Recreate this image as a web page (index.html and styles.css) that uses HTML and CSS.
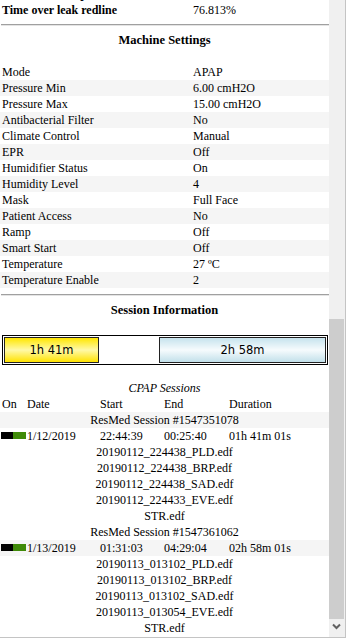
FILE: index.html
```html
<!DOCTYPE html>
<html>
  <head>
    <title>Sleep report</title>
    <link rel="stylesheet" href="styles.css">
  </head>
  <body>
    <div class="window">
      <div class="scroller">
        <div class="inner">
          <div class="kv">
            <div class="row"><b>Leak rate 95th percentile</b><span>18.24 L/min</span></div>
            <div class="row"><b>Time over leak redline</b><span>76.813%</span></div>
          </div>

          <div class="rule"></div>
          <h3>Machine Settings</h3>

          <div class="kv striped">
            <div class="row"><span>Mode</span><span>APAP</span></div>
            <div class="row"><span>Pressure Min</span><span>6.00 cmH2O</span></div>
            <div class="row"><span>Pressure Max</span><span>15.00 cmH2O</span></div>
            <div class="row"><span>Antibacterial Filter</span><span>No</span></div>
            <div class="row"><span>Climate Control</span><span>Manual</span></div>
            <div class="row"><span>EPR</span><span>Off</span></div>
            <div class="row"><span>Humidifier Status</span><span>On</span></div>
            <div class="row"><span>Humidity Level</span><span>4</span></div>
            <div class="row"><span>Mask</span><span>Full Face</span></div>
            <div class="row"><span>Patient Access</span><span>No</span></div>
            <div class="row"><span>Ramp</span><span>Off</span></div>
            <div class="row"><span>Smart Start</span><span>Off</span></div>
            <div class="row"><span>Temperature</span><span>27 ºC</span></div>
            <div class="row"><span>Temperature Enable</span><span>2</span></div>
          </div>

          <div class="rule"></div>
          <h3>Session Information</h3>

          <!-- widths follow the minutes between 22:44 and 04:29 -->
          <div class="timeline">
            <div class="slot on" style="width: 95px">1h 41m</div>
            <div class="gap" style="width: 60px"></div>
            <div class="slot cpap" style="width: 167px">2h 58m</div>
          </div>

          <div class="caption">CPAP Sessions</div>
          <div class="sessions">
            <div class="srow head">
              <span>On</span><span>Date</span><span>Start</span><span>End</span><span>Duration</span>
            </div>

            <div class="title grey">ResMed Session #1547351078</div>
            <div class="srow">
              <span class="bar"><i></i><i></i></span><span>1/12/2019</span><span>22:44:39</span><span>00:25:40</span><span>01h 41m 01s</span>
            </div>
            <div class="files">
              <div>20190112_224438_PLD.edf</div>
              <div>20190112_224438_BRP.edf</div>
              <div>20190112_224438_SAD.edf</div>
              <div>20190112_224433_EVE.edf</div>
              <div>STR.edf</div>
            </div>

            <div class="title">ResMed Session #1547361062</div>
            <div class="srow grey">
              <span class="bar"><i></i><i></i></span><span>1/13/2019</span><span>01:31:03</span><span>04:29:04</span><span>02h 58m 01s</span>
            </div>
            <div class="files">
              <div>20190113_013102_PLD.edf</div>
              <div>20190113_013102_BRP.edf</div>
              <div>20190113_013102_SAD.edf</div>
              <div>20190113_013054_EVE.edf</div>
              <div>STR.edf</div>
            </div>
          </div>
        </div>
      </div>

      <div class="scrollbar">
        <div class="track"></div>
        <div class="thumb"></div>
        <div class="arrow">
          <svg width="16" height="18" viewBox="0 0 16 18">
            <polyline points="4,5.5 7.5,9 11,5.5" fill="none" stroke="#606060" stroke-width="2"/>
          </svg>
        </div>
      </div>
    </div>
  </body>
</html>
```

FILE: styles.css
```css
* { padding: 0; margin: 0; box-sizing: border-box; }

body {
  background: white;
  color: #000;
  font-family: "Liberation Serif", "Times New Roman", serif;
  font-size: 12px;
  line-height: 16px;
}

.window {
  display: flex;
  width: 346px;
  height: 638px;
  border-right: 1px solid #c4c4c4;
  border-bottom: 1px solid #c4c4c4;
}

.scroller {
  width: 329px;
  overflow: hidden;
}

.inner {
  margin-top: -14px;
}

.kv .row {
  display: grid;
  grid-template-columns: 191px 1fr;
  padding-left: 2px;
  height: 16px;
  white-space: nowrap;
}

.striped .row:nth-child(even) { background: #f5f5f5; }

.rule {
  margin: 6px 0 0 1px;
  height: 2px;
  border-top: 1px solid #a0a0a0;
  border-bottom: 1px solid #e4e4e4;
}

h3 {
  margin-top: 6px;
  margin-bottom: 16px;
  height: 16px;
  text-align: center;
  font-size: 12.5px;
}

.timeline {
  display: flex;
  margin: 17px 0 0 2px;
  width: 326px;
  padding: 1px;
  border: 1px solid #000;
}

.slot {
  height: 26px;
  border: 1px solid #222;
  font-family: "DejaVu Sans", Tahoma, sans-serif;
  font-size: 11.5px;
  line-height: 24px;
  text-align: center;
}

.slot.on {
  background: linear-gradient(#ffe600, #fff9a8 50%, #ffe200);
}

.slot.cpap {
  background: linear-gradient(#c6e3ed, #f6fbfd 50%, #c2e0ea);
}

.caption {
  margin-top: 15px;
  text-align: center;
  font-style: italic;
}

.srow {
  display: grid;
  grid-template-columns: 27px 73px 64px 65px 1fr;
  height: 16px;
  white-space: nowrap;
}

.srow.head span:first-child { padding-left: 2px; }

.bar {
  display: flex;
  padding: 4px 0 0 1px;
}

.bar i {
  display: block;
  width: 12px;
  height: 7px;
  background: #000;
}

.bar i + i {
  width: 13px;
  background: #3f8a08;
}

.title, .files div {
  height: 16px;
  text-align: center;
}

.grey { background: #f5f5f5; }

.scrollbar {
  display: flex;
  flex-direction: column;
  width: 16px;
  background: #f0f0f0;
}

.track { height: 319px; }

.thumb {
  height: 300px;
  margin-right: 1px;
  background: #cdcdcd;
}

.arrow {
  flex: 1;
}

.arrow svg { display: block; }
```
